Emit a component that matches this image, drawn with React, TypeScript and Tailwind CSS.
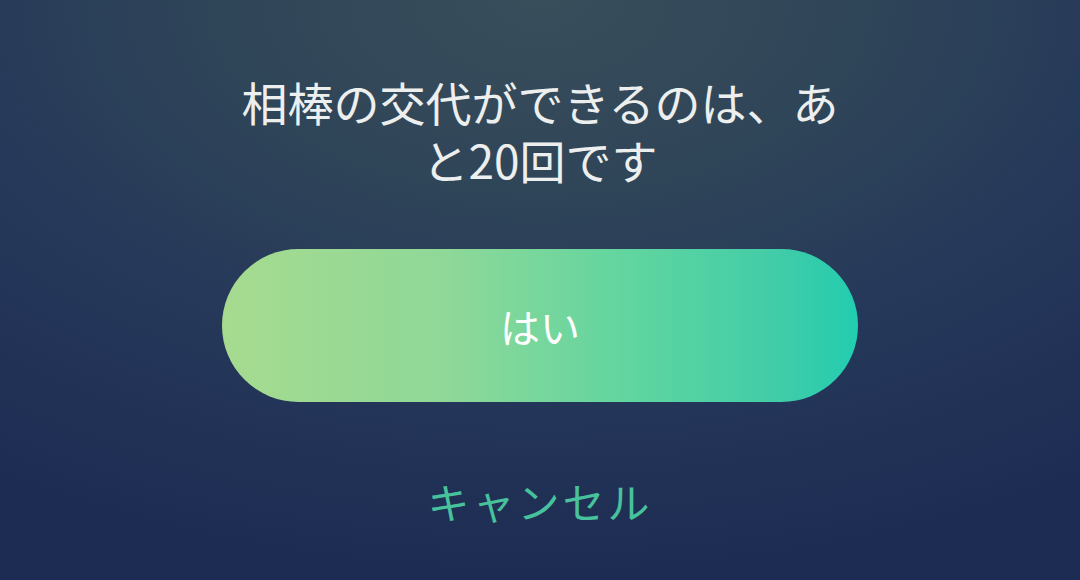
import React from 'react';

const font = { fontFamily: '"Noto Sans CJK JP", "Noto Sans", sans-serif' };

const App = () => {
  const remaining = 20;
  const message = `相棒の交代ができるのは、あと${remaining}回です`;

  return (
    <div
      className="w-[1080px] h-[580px] overflow-hidden flex flex-col items-center bg-[radial-gradient(ellipse_100%_110%_at_50%_0%,#394e5b_0%,#2f4558_30%,#26395a_55%,#1d2c53_90%)]"
      style={font}
    >
      <p className="mt-[72px] w-[620px] text-center text-[46px] leading-[58px] text-[#ecefee]">
        {message}
      </p>

      <button
        type="button"
        className="mt-[61px] w-[636px] h-[153px] rounded-full bg-[linear-gradient(90deg,#a6db8f_0%,#8fd898_35%,#5fd5a0_65%,#40cca8_88%,#22cdb0_100%)] text-white text-[40px] leading-none flex items-center justify-center"
      >
        はい
      </button>

      <button
        type="button"
        className="mt-[74px] text-[42px] leading-[50px] tracking-[3px] text-[#47c29c]"
      >
        キャンセル
      </button>
    </div>
  );
};

export default App;
